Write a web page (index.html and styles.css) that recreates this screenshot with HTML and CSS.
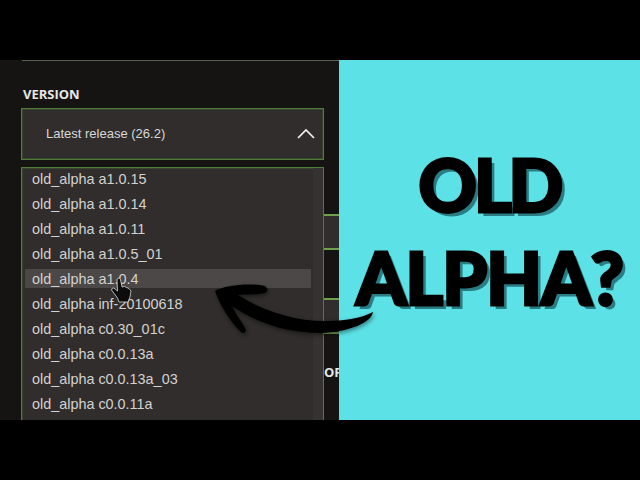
FILE: index.html
```html
<!DOCTYPE html>
<html lang="en">
<head>
    <meta charset="UTF-8">
    <title>Old Alpha?</title>
    <link rel="stylesheet" href="styles.css">
</head>
<body>
    <div class="bar"></div>
    <div class="stage">
        <div class="panel">
            <div class="top-rule"></div>
            <p class="label">VERSION</p>
            <div class="select">
                <span>Latest release (26.2)</span>
                <svg class="chevron" width="18" height="11" viewBox="0 0 18 11">
                    <path d="M1 10 L9 2 L17 10" fill="none" stroke="#f2f2f2" stroke-width="1.7"/>
                </svg>
            </div>
            <div class="lower">
                <div class="list-wrap">
                    <ul class="list">
                        <li>old_alpha a1.0.15</li>
                        <li>old_alpha a1.0.14</li>
                        <li>old_alpha a1.0.11</li>
                        <li>old_alpha a1.0.5_01</li>
                        <li class="hover">old_alpha a1.0.4</li>
                        <li>old_alpha inf-20100618</li>
                        <li>old_alpha c0.30_01c</li>
                        <li>old_alpha c0.0.13a</li>
                        <li>old_alpha c0.0.13a_03</li>
                        <li>old_alpha c0.0.11a</li>
                    </ul>
                    <div class="scroll"></div>
                </div>
                <div class="behind">
                    <div class="stub first"></div>
                    <div class="stub second"></div>
                    <p class="cut">OF</p>
                </div>
            </div>
        </div>
        <div class="title">
            <p class="title-line old">OLD</p>
            <p class="title-line">ALPHA?</p>
        </div>
        <svg class="pointer" width="24" height="26" viewBox="0 0 24 26">
            <path d="M8 2 Q10 0 11.5 2.5 L13 10 L15.5 9.5 L17.5 10.5 L20 11.5 L22 14 L21 20 L19 25 L10 25 L8.5 21 L2.5 13 Q2.5 10.5 5 11 L8.5 14 Z" fill="#0c0c0c" stroke="#d8d8d8" stroke-width="0.8"/>
        </svg>
        <svg class="arrow" width="180" height="70" viewBox="205 275 180 70">
            <path d="M215 291 C225 285 250 283 265 286 Q270 290 265 293 C255 295 245 294 238 295 C265 312 295 321 325 321 C345 321 362 318 373 312 C372 322 350 332 320 333 C285 333 255 322 232 306 C236 315 243 323 246 330 Q245 335 241 332 C230 322 220 305 215 291 Z" fill="#000"/>
        </svg>
    </div>
    <div class="bar"></div>
</body>
</html>
```

FILE: styles.css
```css
* {
    box-sizing: border-box;
}

body {
    margin: 0;
    width: 640px;
    height: 480px;
    overflow: hidden;
    background-color: #000;
    font-family: "Liberation Sans", Arial, sans-serif;
}

.bar {
    height: 60px;
    background-color: #000;
}

.stage {
    position: relative;
    display: flex;
    height: 360px;
    overflow: hidden;
    background-color: #5ce1e6;
}

.panel {
    width: 339px;
    height: 360px;
    flex-shrink: 0;
    padding-left: 21px;
    overflow: hidden;
    background-color: #151413;
}

.top-rule {
    height: 1px;
    margin: 0 0 26px 1px;
    background-color: #5a5f50;
}

.label {
    margin: 0 0 7px 2px;
    height: 14px;
    line-height: 14px;
    font-family: "Open Sans", sans-serif;
    font-size: 13px;
    font-weight: 700;
    color: #e6e6e6;
}

.select {
    display: flex;
    align-items: center;
    justify-content: space-between;
    width: 303px;
    height: 52px;
    padding: 0 8px 2px 24px;
    border: 1px solid #4d8036;
    box-shadow: inset 0 0 0 1px rgba(77, 128, 54, 0.3);
    background-color: #302d2c;
    font-size: 13px;
    color: #d8d8d8;
}

.lower {
    display: flex;
    margin-top: 7px;
}

.list-wrap {
    display: flex;
    width: 303px;
    height: 253px;
    flex-shrink: 0;
    border: 1px solid #4d8036;
    border-bottom: none;
    box-shadow: inset 1px 1px 0 rgba(77, 128, 54, 0.3);
    background-color: #302d2c;
}

.list {
    flex: 1;
    margin: 0;
    padding: 1px 2px 0 3px;
    list-style: none;
    overflow: hidden;
}

.list li {
    height: 19px;
    margin-bottom: 6px;
    padding-left: 7px;
    line-height: 21px;
    font-size: 14.4px;
    color: #d4d2d0;
}

.list li.hover {
    background-color: #4b4847;
}

.scroll {
    width: 10px;
    background-color: #353231;
}

.behind {
    flex: 1;
}

.stub {
    height: 36px;
    border-top: 2px solid #6fa04f;
    border-bottom: 2px solid #6fa04f;
    background-color: #302d2c;
}

.first {
    margin-top: 47px;
}

.second {
    margin-top: 48px;
}

.cut {
    width: 15px;
    margin: 31px 0 0;
    line-height: 14px;
    overflow: hidden;
    font-family: "Open Sans", sans-serif;
    font-size: 13px;
    font-weight: 700;
    color: #e6e6e6;
}

.title {
    flex: 1;
    padding-top: 92px;
    text-align: center;
}

.title-line {
    margin: 0 0 28px;
    height: 65px;
    line-height: 65px;
    font-family: "Lato", sans-serif;
    font-size: 72px;
    font-weight: 900;
    letter-spacing: -1px;
    color: #000;
    -webkit-text-stroke: 3px #000;
    text-shadow: 4px 4px 0 #2a7d84;
}

.old {
    letter-spacing: -3px;
}

.pointer {
    position: absolute;
    left: 109px;
    top: 217px;
}

.arrow {
    position: absolute;
    left: 205px;
    top: 215px;
    filter: drop-shadow(1px 2px 2px rgba(0, 0, 0, 0.45));
}
```
